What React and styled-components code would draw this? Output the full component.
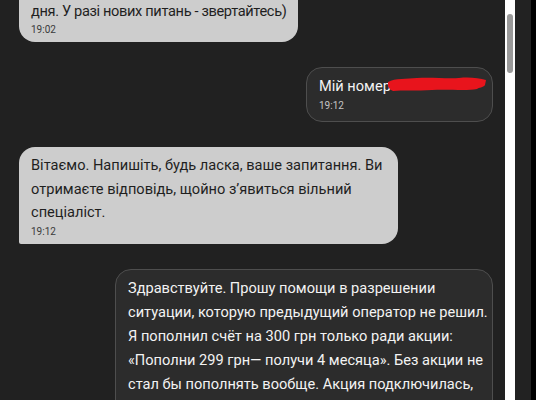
import React, { useLayoutEffect, useRef } from 'react';
import styled, { createGlobalStyle } from 'styled-components';

const GlobalStyle = createGlobalStyle`
  html, body {
    margin: 0;
    padding: 0;
    background: #212121;
  }
  * {
    box-sizing: border-box;
  }
`;

const Screen = styled.div`
  display: flex;
  width: 536px;
  height: 400px;
  overflow: hidden;
  background: #212121;
  font-family: Roboto, "Noto Sans", sans-serif;
`;

const Feed = styled.div`
  flex: 1;
  height: 100%;
  overflow: hidden;
`;

const List = styled.div`
  display: flex;
  flex-direction: column;
  gap: 25px;
  padding: 12px 0 40px;
`;

const Bubble = styled.div`
  width: ${(p) => (p.$width ? `${p.$width}px` : 'auto')};
  font-size: 14.6px;
  letter-spacing: ${(p) => (p.$tight ? '-0.35px' : 'normal')};
  white-space: nowrap;
  ${(p) =>
    p.$out
      ? `
    align-self: flex-end;
    margin-right: 12px;
    padding: 6px 10px 9px 12px;
    line-height: 24px;
    background: #2c2c2c;
    border: 1px solid #4e4e4e;
    color: #f3f3f3;
    border-radius: 16px;
  `
      : `
    align-self: flex-start;
    margin-left: 19px;
    padding: 7px 12px 6px;
    line-height: 23.5px;
    background: #cdcdcd;
    color: #1f1f1f;
    border-radius: ${p.$tail ? '16px 16px 16px 2px' : '16px'};
  `}
`;

const Time = styled.div`
  font-size: 10px;
  line-height: 12px;
  margin-top: 1px;
  letter-spacing: normal;
  color: ${(p) => (p.$out ? '#c4c4c4' : '#3a3a3a')};
`;

const Hidden = styled.span`
  display: inline-block;
  vertical-align: -1px;
  margin-left: -4px;
`;

const Track = styled.div`
  width: 10px;
  height: 100%;
  background: #ffffff;
  padding: 14px 2px 0;
`;

const Thumb = styled.div`
  width: 6px;
  height: 59px;
  border-radius: 3px;
  background: #9a9a9a;
`;

const Side = styled.div`
  width: 16px;
  height: 100%;
  background: #222222;
`;

const Edge = styled.div`
  width: 5px;
  height: 100%;
  background: #000000;
`;

// red marker stroke hiding the phone number
const Scribble = () => (
  <Hidden>
    <svg width="100" height="16" viewBox="0 0 100 16">
      <path
        d="M1 6 C8 2 20 3 30 2 C45 1 60 3 72 2 C82 1 92 2 99 4 L98 9 C96 12 92 11 90 13 C80 15 60 13 45 14 C30 15 15 14 6 15 C3 14 2 12 1 10 Z"
        fill="#e8141c"
      />
    </svg>
  </Hidden>
);

const Lines = ({ lines }) =>
  lines.map((l, i) => (
    <React.Fragment key={i}>
      {l}
      {i < lines.length - 1 && <br />}
    </React.Fragment>
  ));

const App = () => {
  const feedRef = useRef(null);

  useLayoutEffect(() => {
    if (feedRef.current) feedRef.current.scrollTop = 43;
  }, []);

  return (
    <>
      <GlobalStyle />
      <Screen>
        <Feed ref={feedRef}>
          <List>
            <Bubble $width={279} $tight>
              <Lines
                lines={[
                  'Дякуємо за звернення. Відповідь надамо',
                  'дня. У разі нових питань - звертайтесь)',
                ]}
              />
              <Time>19:02</Time>
            </Bubble>

            <Bubble $out $width={187}>
              Мій номер
              <Scribble />
              <Time $out>19:12</Time>
            </Bubble>

            <Bubble $width={379} $tail>
              <Lines
                lines={[
                  'Вітаємо. Напишіть, будь ласка, ваше запитання. Ви',
                  'отримаєте відповідь, щойно з’явиться вільний',
                  'спеціаліст.',
                ]}
              />
              <Time>19:12</Time>
            </Bubble>

            <Bubble $out $width={378}>
              <Lines
                lines={[
                  'Здравствуйте. Прошу помощи в разрешении',
                  'ситуации, которую предыдущий оператор не решил.',
                  'Я пополнил счёт на 300 грн только ради акции:',
                  '«Пополни 299 грн— получи 4 месяца». Без акции не',
                  'стал бы пополнять вообще. Акция подключилась,',
                  'деньги списались. После этого я сменил тариф — без',
                  'предупреждения акция пропала.',
                ]}
              />
              <Time $out>19:14</Time>
            </Bubble>
          </List>
        </Feed>
        <Track>
          <Thumb />
        </Track>
        <Side />
        <Edge />
      </Screen>
    </>
  );
};

export default App;
